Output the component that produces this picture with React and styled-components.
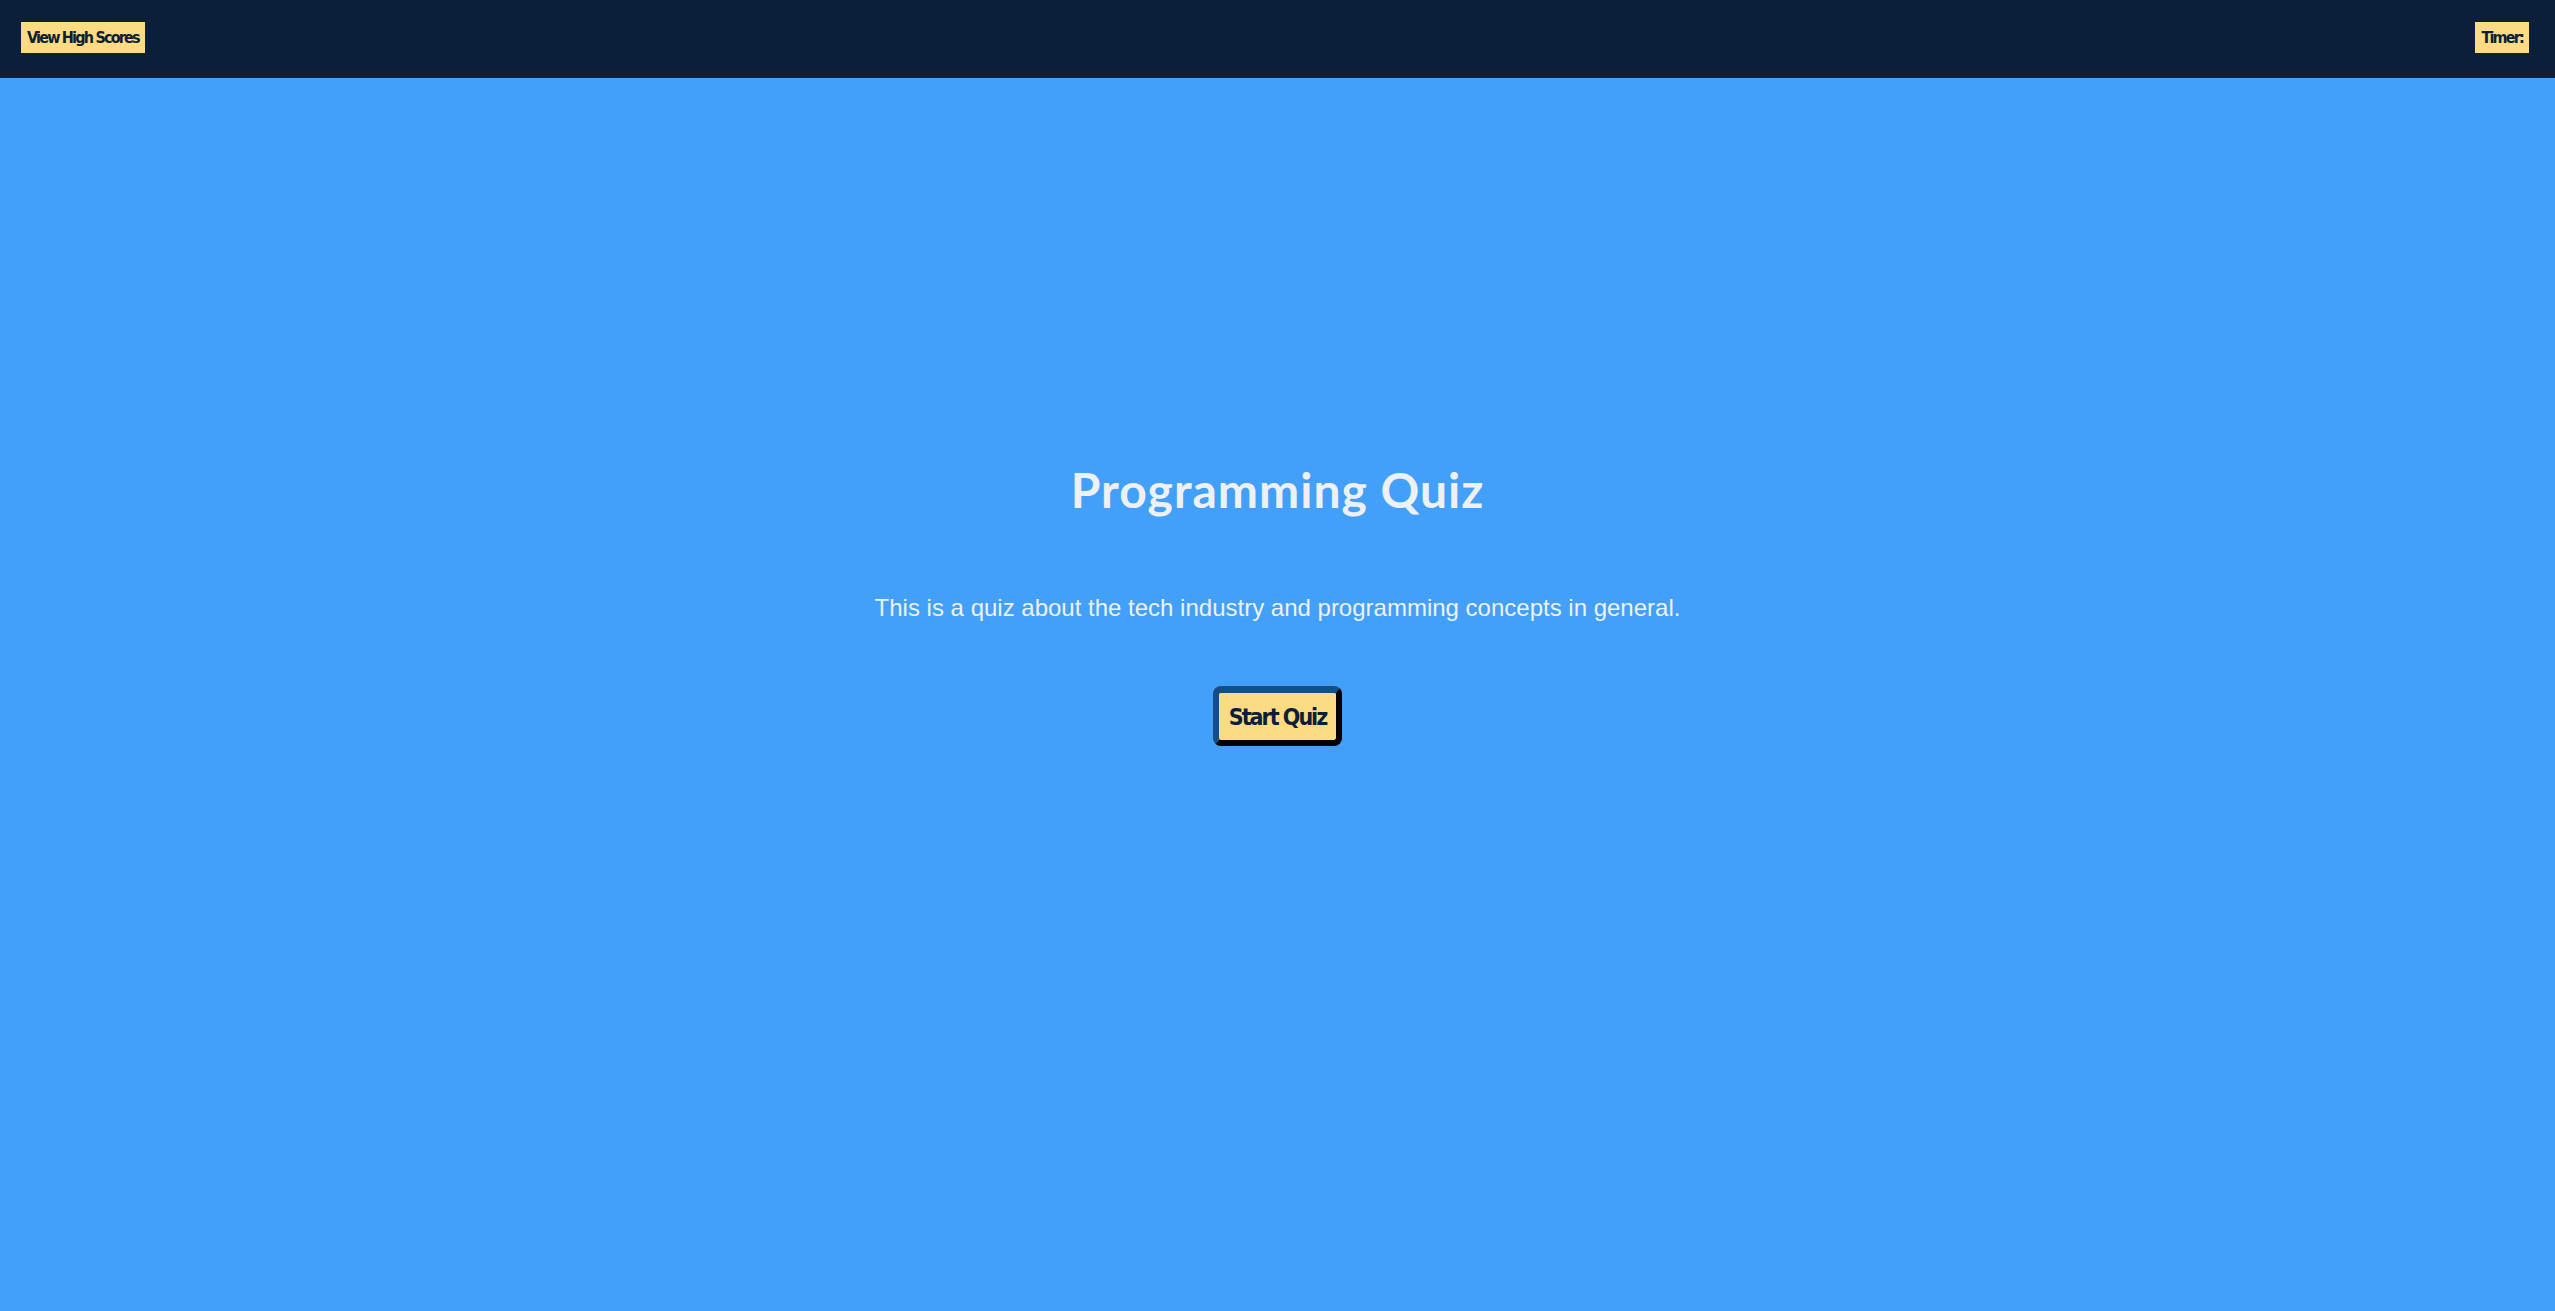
import styled, { createGlobalStyle } from "styled-components";

const GlobalStyle = createGlobalStyle`
  html, body {
    margin: 0;
    padding: 0;
    background-color: #42a0f8;
    font-family: "Liberation Sans", Arial, sans-serif;
  }
  #root {
    min-height: 100vh;
  }
`;

const App = () => {
  return (
    <>
      <GlobalStyle />
      <Page>
        <TopBar>
          <Chip>View High Scores</Chip>
          <Chip>Timer:</Chip>
        </TopBar>
        <Main>
          <Title>Programming Quiz</Title>
          <Intro>This is a quiz about the tech industry and programming concepts in general.</Intro>
          <StartButton>Start Quiz</StartButton>
        </Main>
      </Page>
    </>
  );
};

const Page = styled.div`
  display: flex;
  flex-direction: column;
  min-height: 100vh;
  background-color: #42a0f8;
`;

const TopBar = styled.header`
  display: flex;
  justify-content: space-between;
  align-items: flex-start;
  height: 78px;
  box-sizing: border-box;
  padding: 22px 26px 0 21px;
  background-color: #0b1f38;
`;

const Chip = styled.div`
  height: 31px;
  box-sizing: border-box;
  display: flex;
  align-items: center;
  padding: 0 6px;
  background-color: #fcdb82;
  color: #0b1f38;
  font-family: "DejaVu Sans Condensed", "Liberation Sans", sans-serif;
  font-weight: 700;
  font-size: 16px;
  letter-spacing: -1.8px;
`;

const Main = styled.main`
  display: flex;
  flex-direction: column;
  align-items: center;
  padding-top: 388px;
`;

const Title = styled.h1`
  margin: 0;
  font-family: "Comic Sans MS", Lato, sans-serif;
  font-size: 48px;
  line-height: 1;
  font-weight: 700;
  letter-spacing: 1px;
  color: #eef0f4;
`;

const Intro = styled.p`
  margin: 82px 0 0;
  font-size: 24px;
  line-height: 1;
  color: #eef1f6;
`;

const StartButton = styled.button`
  margin-top: 66px;
  height: 60px;
  box-sizing: border-box;
  padding: 0 10px;
  border-style: solid;
  border-width: 7px 6px 6px 6px;
  border-color: #174d87 #000 #000 #174d87;
  border-radius: 8px;
  background-color: #fcdb82;
  color: #0b1f38;
  font-family: "DejaVu Sans Condensed", "Liberation Sans", sans-serif;
  font-weight: 700;
  font-size: 23px;
  letter-spacing: -2px;
  cursor: pointer;
`;

export default App;
